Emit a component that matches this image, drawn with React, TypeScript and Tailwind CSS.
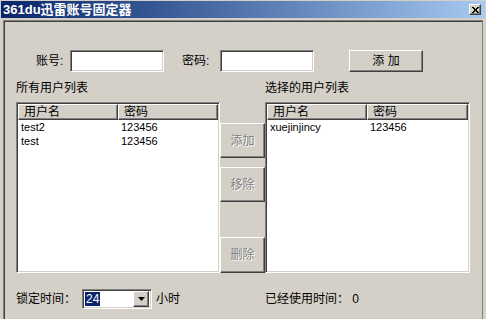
import React from "react";

const FONT = { fontFamily: '"Liberation Sans", "Noto Sans CJK SC", sans-serif' };

const sunken =
  "border border-t-[#808080] border-l-[#808080] border-b-white border-r-white shadow-[inset_1px_1px_0_#404040,inset_-1px_-1px_0_#d4d0c8]";
const raised =
  "border border-t-white border-l-white border-b-[#404040] border-r-[#404040] shadow-[inset_-1px_-1px_0_#808080]";

interface User {
  name: string;
  pwd: string;
}

const ALL_USERS: User[] = [
  { name: "test2", pwd: "123456" },
  { name: "test", pwd: "123456" },
];

const SELECTED: User[] = [{ name: "xuejinjincy", pwd: "123456" }];

function UserList({ users, width }: { users: User[]; width: string }) {
  return (
    <div className={`${sunken} ${width} h-[171px] bg-white p-[1px] flex flex-col`}>
      <div className="flex h-[16px] bg-[#d4d0c8] text-[12px] leading-[14px] text-black">
        <div className={`${raised} w-[100px] pl-[5px]`}>用户名</div>
        <div className={`${raised} flex-1 pl-[5px]`}>密码</div>
      </div>
      {users.map((u) => (
        <div key={u.name} className="flex h-[14px] text-[11px] leading-[14px] text-black">
          <div className="w-[103px] pl-[3px]">{u.name}</div>
          <div>{u.pwd}</div>
        </div>
      ))}
    </div>
  );
}

function GrayButton({ label, h }: { label: string; h: string }) {
  return (
    <div
      className={`${raised} w-[45px] ${h} bg-[#d4d0c8] flex items-center justify-center text-[12px] text-[#808080] [text-shadow:1px_1px_0_#fff]`}
    >
      {label}
    </div>
  );
}

export default function App() {
  return (
    <div className="w-[486px] h-[319px] bg-[#d4d0c8] overflow-hidden flex flex-col" style={FONT}>
      {/* title bar */}
      <div className="mt-[1px] mx-[1px] h-[17px] bg-gradient-to-r from-[#0a246a] to-[#a6caf0] flex items-center justify-between pl-[2px] pr-[4px]">
        <span className="text-white font-bold text-[13px] leading-[17px]">361du迅雷账号固定器</span>
        <div className={`${raised} w-[12px] h-[11px] bg-[#d4d0c8] flex items-center justify-center`}>
          <svg width="7" height="6" viewBox="0 0 7 6">
            <path d="M0 0L6 6M1 0L7 6M6 0L0 6M7 0L1 6" stroke="#000" strokeWidth="1" />
          </svg>
        </div>
      </div>

      {/* body */}
      <div className="mt-[2px] mx-[3px] flex-1 border-t border-l border-r border-[#808080] shadow-[inset_1px_1px_0_#404040] pl-[12px]">
        {/* account row */}
        <div className="mt-[29px] flex items-center h-[22px] text-[12px] text-black">
          <span className="ml-[20px] w-[34px]">账号:</span>
          <div className={`${sunken} w-[94px] h-[22px] bg-white`} />
          <span className="ml-[18px] w-[38px]">密码:</span>
          <div className={`${sunken} w-[94px] h-[22px] bg-white`} />
          <div className={`${raised} ml-[35px] w-[74px] h-[22px] flex items-center justify-center`}>添 加</div>
        </div>

        {/* headings */}
        <div className="mt-[9px] flex text-[12px] leading-[14px] text-black">
          <span className="w-[249px]">所有用户列表</span>
          <span>选择的用户列表</span>
        </div>

        {/* lists */}
        <div className="mt-[7px] flex">
          <UserList users={ALL_USERS} width="w-[204px]" />
          <div className="flex flex-col pt-[21px]">
            <GrayButton label="添加" h="h-[35px]" />
            <div className="h-[9px]" />
            <GrayButton label="移除" h="h-[35px]" />
            <div className="h-[35px]" />
            <GrayButton label="删除" h="h-[36px]" />
          </div>
          <UserList users={SELECTED} width="w-[205px]" />
        </div>

        {/* bottom row */}
        <div className="mt-[16px] flex items-center h-[20px] text-[12px] text-black">
          <span className="w-[66px]">锁定时间：</span>
          <div className={`${sunken} w-[70px] h-[20px] bg-white flex items-center pl-[2px] pr-[2px]`}>
            <span className="bg-[#0a246a] text-white text-[12px] leading-[14px] px-[1px]">24</span>
            <div className="flex-1" />
            <div className={`${raised} w-[16px] h-[16px] bg-[#d4d0c8] flex items-center justify-center`}>
              <svg width="7" height="4" viewBox="0 0 7 4">
                <path d="M0 0H7L3.5 4Z" fill="#000" />
              </svg>
            </div>
          </div>
          <span className="ml-[4px]">小时</span>
          <span className="ml-[85px]">已经使用时间： 0</span>
        </div>
      </div>
    </div>
  );
}
